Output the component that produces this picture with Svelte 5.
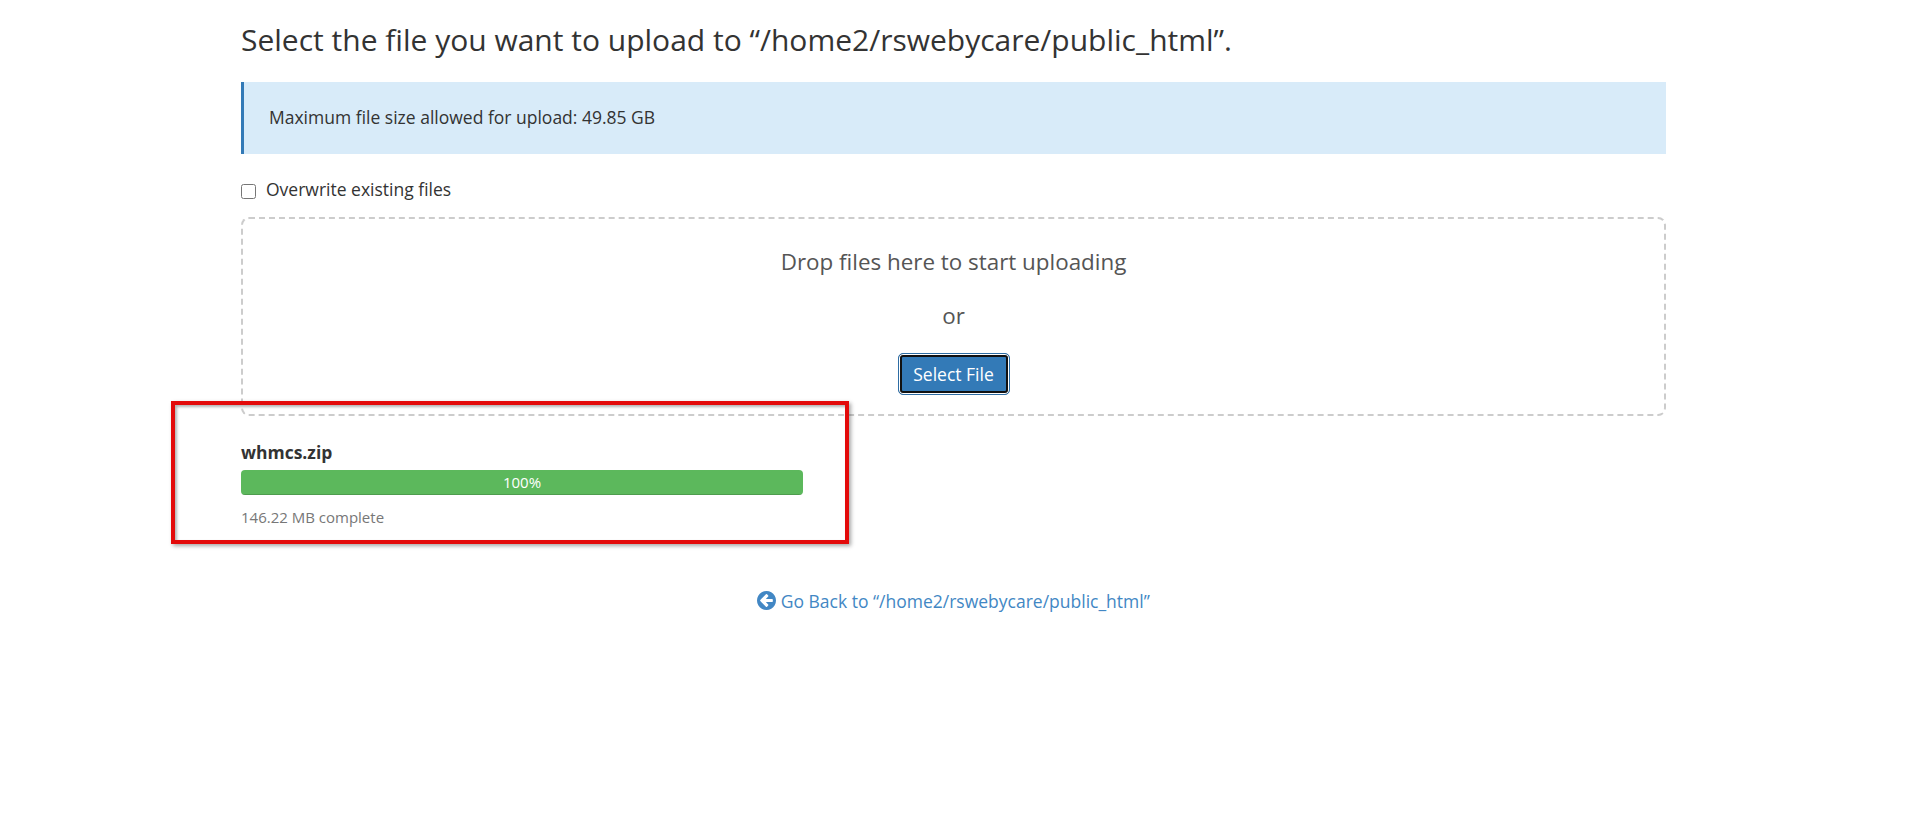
<script>
  let overwrite = $state(false);
  const path = "/home2/rswebycare/public_html";
  const upload = { name: "whmcs.zip", percent: 100, size: "146.22 MB" };
</script>

<main class="page">
  <h1>Select the file you want to upload to “{path}”.</h1>

  <div class="alert">Maximum file size allowed for upload: 49.85 GB</div>

  <label class="overwrite">
    <input type="checkbox" bind:checked={overwrite} />
    Overwrite existing files
  </label>

  <div class="dropzone">
    <p class="drop-text">Drop files here to start uploading</p>
    <p class="or">or</p>
    <button class="select-file">Select File</button>
  </div>

  <div class="upload">
    <div class="annotation"></div>
    <div class="upload-name">{upload.name}</div>
    <div class="progress">
      <div class="bar" style={`width: ${upload.percent}%`}>{upload.percent}%</div>
    </div>
    <div class="upload-size">{upload.size} complete</div>
  </div>

  <div class="back">
    <a href="#back">
      <svg viewBox="0 0 1536 1536" width="19" height="19" aria-hidden="true"><path fill="currentColor" d="M1280 832V704q0-26-19-45t-45-19H714l189-189q19-19 19-45t-19-45l-91-91q-18-18-45-18t-45 18L360 632l-91 91q-18 18-18 45t18 45l91 91 362 362q18 18 45 18t45-18l91-91q18-18 18-45t-18-45L714 896h502q26 0 45-19t19-45zm256-64q0 209-103 385.500T1153.500 1433 768 1536t-385.500-103T103 1153.500 0 768t103-385.500T382.500 103 768 0t385.500 103T1433 382.500 1536 768z"/></svg>
      Go Back to “{path}”
    </a>
  </div>
</main>

<style>
  :global(body) {
    background: #fff;
    color: #333;
    font-family: "Open Sans", "Liberation Sans", sans-serif;
    font-size: 17.5px;
  }
  .page {
    width: 1425px;
    margin-left: 241px;
    padding-top: 20px;
  }
  h1 {
    margin: 0;
    font-size: 30px;
    font-weight: 400;
    line-height: 40px;
  }
  .alert {
    margin-top: 22px;
    height: 72px;
    box-sizing: border-box;
    padding: 0 0 2px 25px;
    display: flex;
    align-items: center;
    background: #d8ebf9;
    border-left: 3px solid #337ab7;
  }
  .overwrite {
    display: flex;
    align-items: center;
    gap: 10px;
    margin-top: 24px;
    height: 22px;
  }
  .overwrite input {
    width: 15px;
    height: 15px;
    margin: 4px 0 0;
  }
  .dropzone {
    margin-top: 17px;
    height: 199px;
    box-sizing: border-box;
    border: 2px dashed #ccc;
    border-radius: 8px;
    display: flex;
    flex-direction: column;
    align-items: center;
    color: #555;
    font-size: 22.4px;
  }
  .drop-text {
    margin: 27px 0 0;
    line-height: 32px;
  }
  .or {
    margin: 22px 0 0;
    line-height: 32px;
  }
  .select-file {
    margin-top: 21px;
    width: 112px;
    height: 42px;
    background: #337ab7;
    color: #fff;
    font: inherit;
    font-size: 17.5px;
    border: 1px solid #2e6da4;
    border-radius: 5px;
    box-shadow: inset 0 0 0 1px #fff, inset 0 0 0 3px #111;
  }
  .upload {
    position: relative;
    margin-top: 24px;
    width: 562px;
  }
  .annotation {
    position: absolute;
    left: -70px;
    right: -46px;
    top: -39px;
    height: 143px;
    box-sizing: border-box;
    border: 4px solid #e30a0a;
    box-shadow: 2px 2px 4px rgba(0, 0, 0, 0.35), inset 2px 2px 3px rgba(0, 0, 0, 0.3);
    pointer-events: none;
  }
  .upload-name {
    font-weight: 700;
    line-height: 24px;
  }
  .progress {
    margin-top: 6px;
    height: 25px;
    background: #f5f5f5;
    border-radius: 4px;
    overflow: hidden;
  }
  .bar {
    height: 100%;
    background: #5cb85c;
    box-shadow: inset 0 -1px 0 rgba(0, 0, 0, 0.15);
    color: #fff;
    font-size: 15px;
    line-height: 25px;
    text-align: center;
  }
  .upload-size {
    margin-top: 12px;
    color: #777;
    font-size: 15px;
    line-height: 20px;
  }
  .back {
    margin-top: 62px;
    text-align: center;
  }
  .back a {
    color: #4287c4;
    text-decoration: none;
  }
  .back svg {
    vertical-align: -2px;
  }
</style>
